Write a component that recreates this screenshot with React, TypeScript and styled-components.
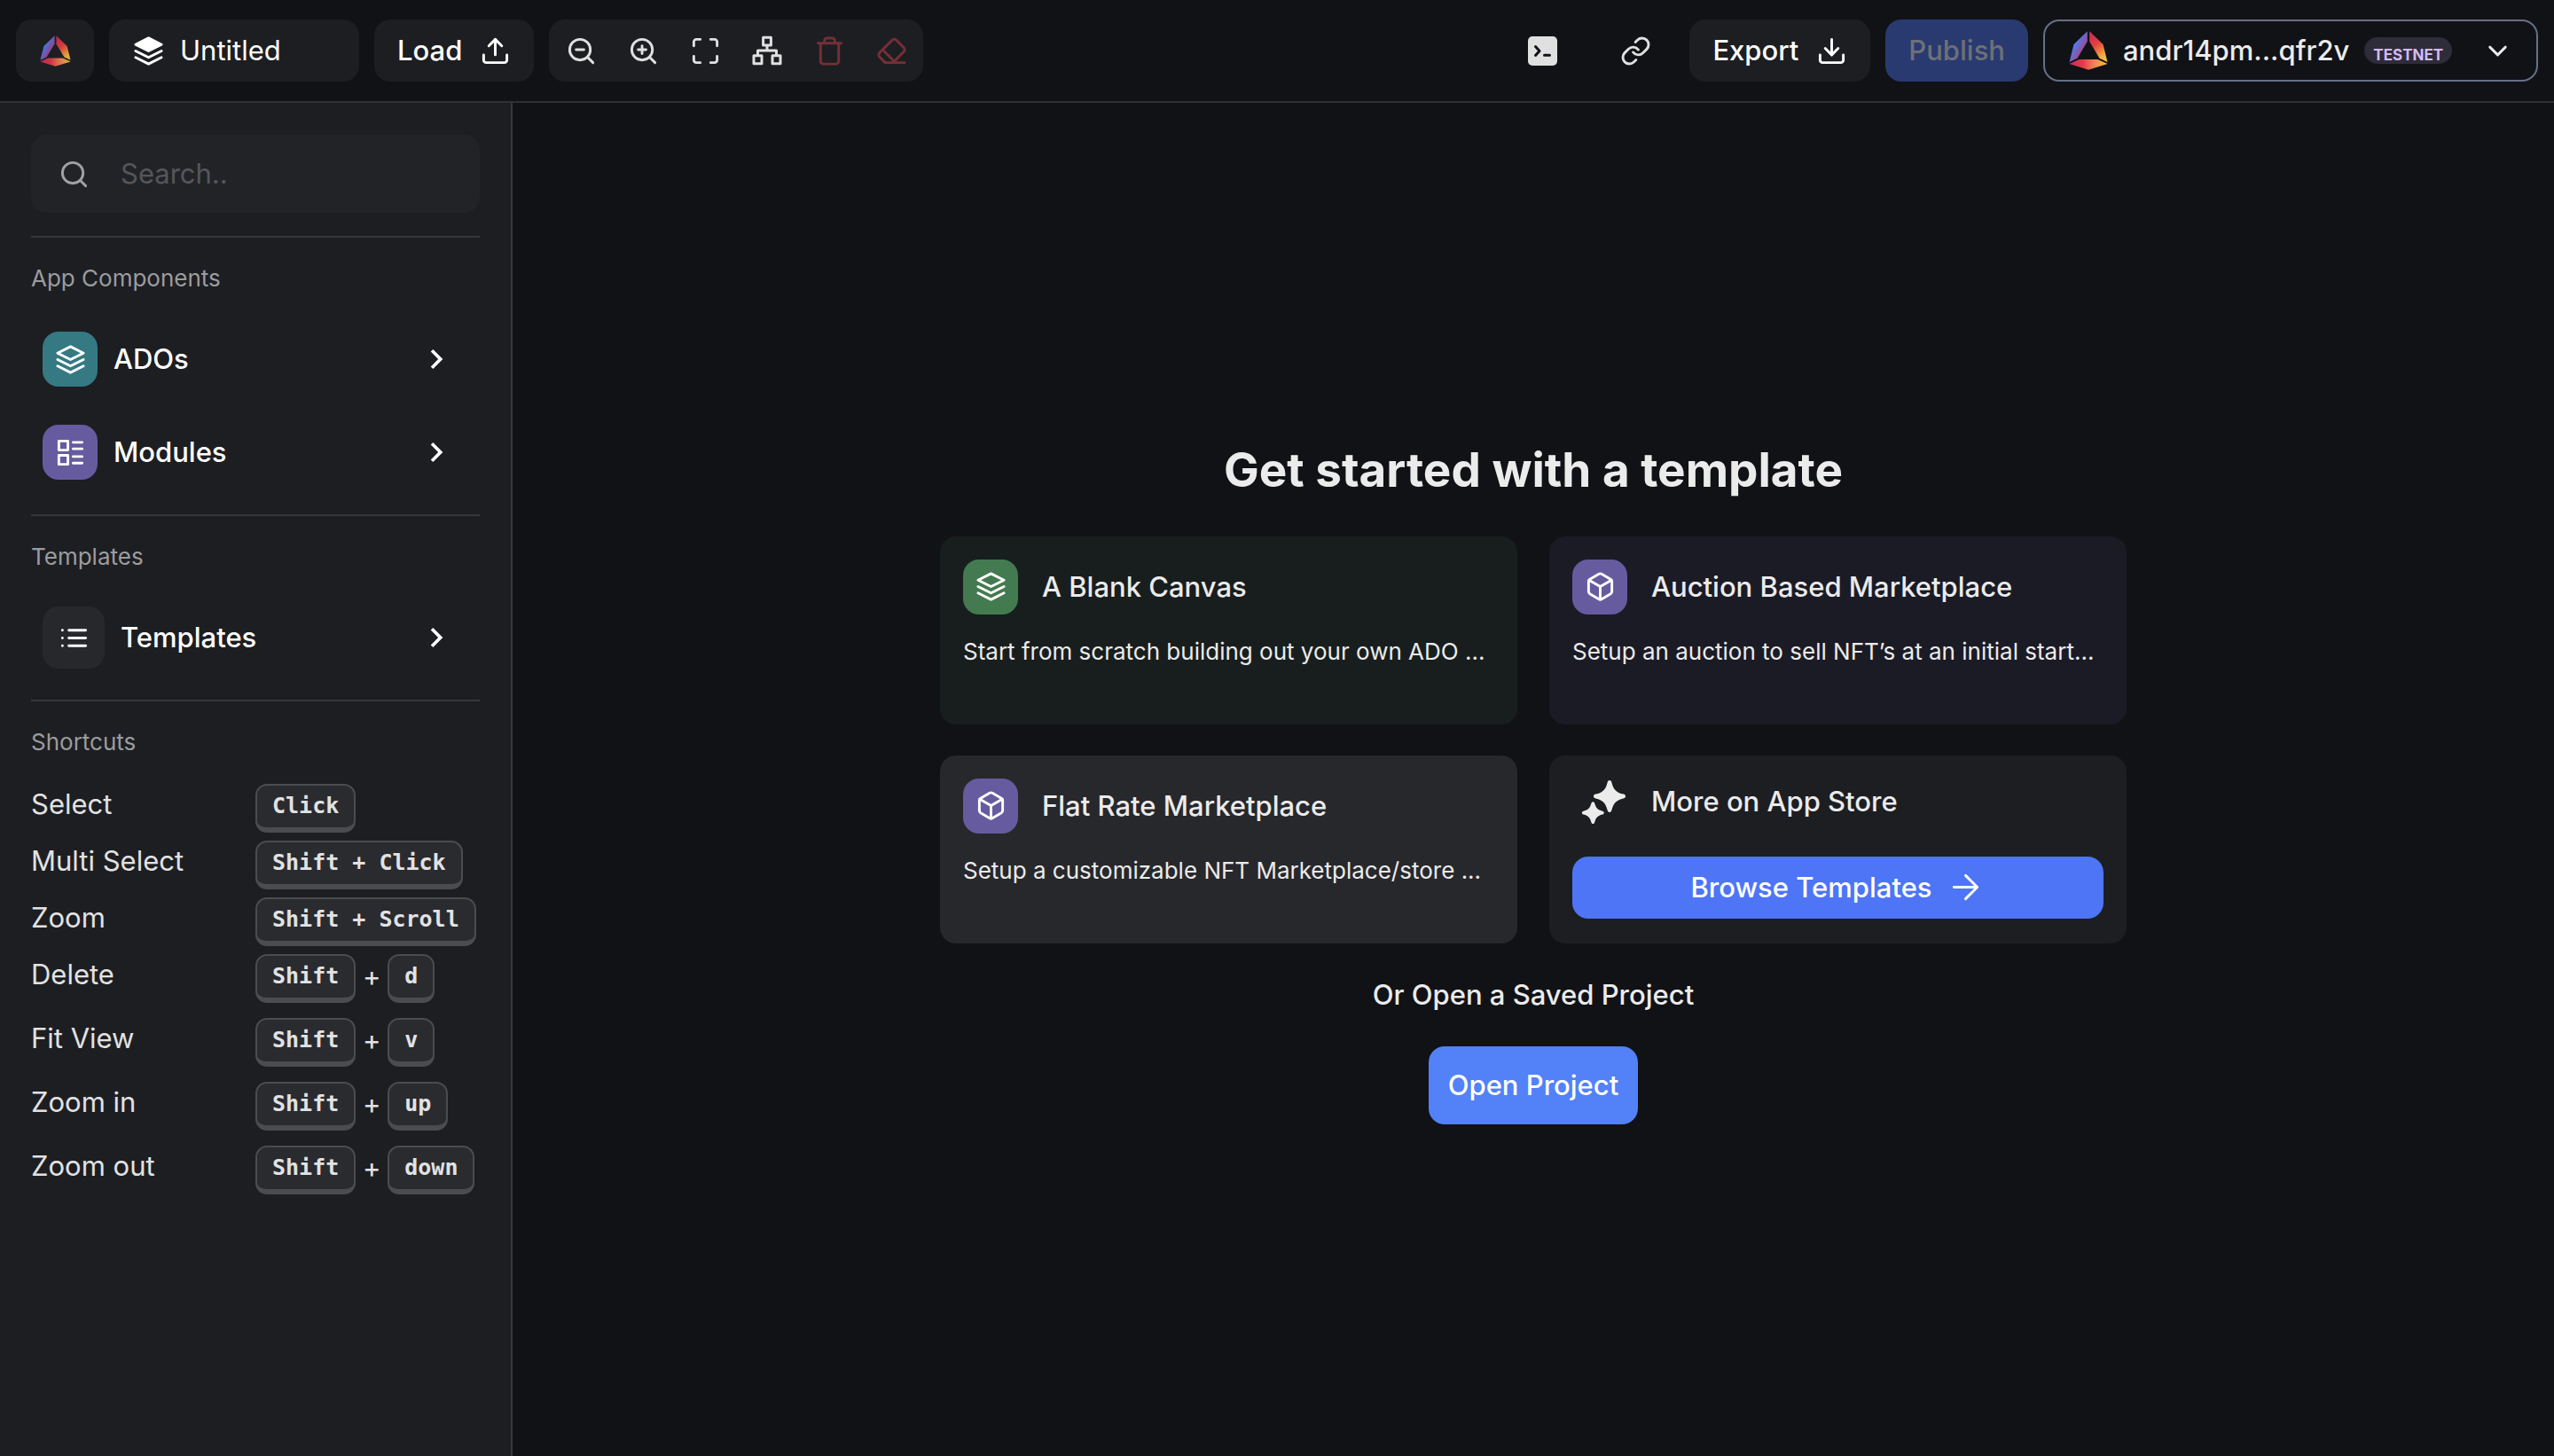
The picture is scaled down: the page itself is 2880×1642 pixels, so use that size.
import React from "react";
import styled, { createGlobalStyle } from "styled-components";

const GlobalStyle = createGlobalStyle`
  *, *::before, *::after { box-sizing: border-box; }
  body {
    margin: 0;
    background: #111216;
    color: #ebebeb;
    font-family: Inter, "Liberation Sans", sans-serif;
    font-size: 31px;
    line-height: 46px;
  }
  button, input { font: inherit; color: inherit; border: 0; margin: 0; padding: 0; }
  button { cursor: pointer; background: none; }
  button:disabled { cursor: default; }
  h1, h2, h3, p, dl, dd, ul { margin: 0; padding: 0; font-size: inherit; font-weight: inherit; }
`;

const Page = styled.div`
  min-height: 100vh;
  display: flex;
  flex-direction: column;
`;

const Header = styled.header`
  display: flex;
  justify-content: space-between;
  padding: 22px 18px;
  border-bottom: 2px solid #2f3034;
`;

const HeaderGroup = styled.div`
  display: flex;
  gap: 17px;
`;

const HeaderButton = styled.button<{ $tone?: "panel" | "plain" | "primary" }>`
  display: flex;
  align-items: center;
  justify-content: center;
  gap: 20px;
  height: 70px;
  padding: 0 26px;
  border-radius: 18px;
  font-weight: 500;
  color: ${(p) => (p.$tone === "primary" ? "#6e7076" : "#ffffff")};
  background: ${(p) =>
    p.$tone === "primary" ? "#293a71" : p.$tone === "plain" ? "transparent" : "#1d1e22"};
`;

const LogoButton = styled(HeaderButton)`
  width: 88px;
  padding: 0;
`;

const IconButton = styled(HeaderButton)`
  width: 88px;
  padding: 0;
  color: #e0e0e0;
`;

const ProjectName = styled.button`
  display: flex;
  align-items: center;
  gap: 18px;
  width: 282px;
  height: 70px;
  padding: 0 27px;
  border-radius: 18px;
  background: #1d1e22;
  color: #ffffff;
`;

const Toolbar = styled.div`
  display: flex;
  height: 70px;
  padding: 0 1px;
  border-radius: 18px;
  background: #1d1e22;
`;

const ToolButton = styled.button<{ $danger?: boolean }>`
  display: flex;
  align-items: center;
  justify-content: center;
  width: 70px;
  color: ${(p) => (p.$danger ? "#742f37" : "#e0e0e0")};
`;

const Account = styled.button`
  display: flex;
  align-items: center;
  gap: 17px;
  width: 558px;
  height: 70px;
  padding: 0 26px 0 27px;
  border: 2px solid #667085;
  border-radius: 18px;
  color: #ebebeb;
  font-weight: 500;

  & > svg:last-child { margin-left: auto; }
`;

const Badge = styled.span`
  padding: 10px 10px 0;
  height: 30px;
  border-radius: 15px;
  background: #2f2c39;
  color: #d3bcf6;
  font-size: 17px;
  line-height: 20px;
  font-weight: 700;
`;

const Body = styled.div`
  flex: 1;
  display: flex;
`;

const Sidebar = styled.aside`
  flex: none;
  width: 578px;
  padding: 36px 35px;
  background: #1d1e22;
  border-right: 2px solid #38393d;
`;

const SearchField = styled.label`
  display: flex;
  align-items: center;
  gap: 35px;
  height: 88px;
  padding: 0 31px;
  margin-bottom: 26px;
  border-radius: 18px;
  background: #222327;
  color: #a1a1a4;
`;

const SearchInput = styled.input`
  flex: 1;
  min-width: 0;
  background: transparent;
  outline: none;
  &::placeholder { color: #55565a; opacity: 1; }
`;

const Section = styled.section`
  padding: 26px 0;
  border-top: 2px solid #36373b;
`;

const SectionTitle = styled.h2`
  margin-bottom: 27px;
  font-size: 26px;
  line-height: 40px;
  color: #9b9c9f;
`;

const NavItem = styled.button`
  display: flex;
  align-items: center;
  gap: 18px;
  width: 100%;
  height: 88px;
  padding: 0 27px 0 13px;
  color: #ffffff;
  font-weight: 500;

  & + & { margin-top: 17px; }
  & > svg { margin-left: auto; }
`;

const NavList = styled.div`
  display: flex;
  flex-direction: column;
`;

const Tile = styled.span<{ $color: string; $large?: boolean }>`
  display: flex;
  align-items: center;
  justify-content: center;
  flex: none;
  width: ${(p) => (p.$large ? 70 : 62)}px;
  height: ${(p) => (p.$large ? 70 : 62)}px;
  border-radius: 18px;
  background: ${(p) => p.$color};
  color: #ffffff;
`;

const Shortcuts = styled.dl`
  display: flex;
  flex-direction: column;
  gap: 9px;
`;

const ShortcutRow = styled.div<{ $combo?: boolean }>`
  display: grid;
  grid-template-columns: 253px 1fr;
  height: ${(p) => (p.$combo ? 63 : 55)}px;
  color: #e2e2e2;
`;

const Keys = styled.dd`
  display: flex;
  align-items: flex-start;
`;

const Key = styled.kbd`
  height: 55px;
  padding: 0 17px;
  border: 2px solid #4b4c50;
  border-bottom-width: 6px;
  border-radius: 13px;
  background: #2a2b2f;
  font-family: "DejaVu Sans Mono", monospace;
  font-size: 25px;
  font-weight: 700;
  line-height: 45px;
  white-space: pre;
`;

const Plus = styled.span`
  width: 36px;
  line-height: 50px;
  text-align: center;
`;

const Main = styled.main`
  flex: 1;
  min-width: 0;
  display: flex;
  flex-direction: column;
  align-items: center;
  justify-content: center;
  gap: 35px;
  padding: 0 36px;
`;

const Title = styled.h1`
  font-size: 53px;
  line-height: 79px;
  font-weight: 700;
`;

const Cards = styled.div`
  display: grid;
  grid-template-columns: repeat(2, minmax(0, 1fr));
  gap: 35px 36px;
  width: 100%;
  max-width: 1338px;
`;

const Card = styled.article<{ $color: string }>`
  min-height: 212px;
  padding: 26px;
  border-radius: 18px;
  background: ${(p) => p.$color};
`;

const CardHead = styled.div`
  display: flex;
  align-items: center;
  gap: 27px;
  font-weight: 500;
`;

const CardText = styled.p`
  margin-top: 22px;
  font-size: 26px;
  line-height: 40px;
  white-space: nowrap;
  overflow: hidden;
`;

const BrowseLink = styled.a`
  display: flex;
  align-items: center;
  justify-content: center;
  gap: 20px;
  height: 70px;
  margin-top: 35px;
  padding-right: 5px;
  border-radius: 18px;
  background: #4e75f6;
  color: #ffffff;
  font-weight: 500;
  text-decoration: none;
`;

const Or = styled.p`
  font-weight: 500;
`;

const OpenButton = styled.button`
  height: 88px;
  padding: 0 22px;
  border-radius: 18px;
  background: #5281f8;
  color: #ffffff;
  font-weight: 500;
`;

type IconProps = { children: React.ReactNode; size?: number; stroke?: number };

const Icon = ({ children, size = 35, stroke = 2 }: IconProps) => (
  <svg
    width={size}
    height={size}
    viewBox="0 0 24 24"
    fill="none"
    stroke="currentColor"
    strokeWidth={stroke}
    strokeLinecap="round"
    strokeLinejoin="round"
    aria-hidden="true"
  >
    {children}
  </svg>
);

const LayersIcon = ({ filled = false }: { filled?: boolean }) => (
  <Icon>
    <path d="M12 2 2 7l10 5 10-5-10-5Z" fill={filled ? "currentColor" : "none"} />
    <path d="m2 17 10 5 10-5" />
    <path d="m2 12 10 5 10-5" />
  </Icon>
);

const TrayIcon = ({ arrow }: { arrow: "up" | "down" }) => (
  <Icon>
    <path d="M21 15v4a2 2 0 0 1-2 2H5a2 2 0 0 1-2-2v-4" />
    <path d="M12 3v12" />
    <path d={arrow === "up" ? "m17 8-5-5-5 5" : "m7 10 5 5 5-5"} />
  </Icon>
);

const ZoomIcon = ({ plus = false }: { plus?: boolean }) => (
  <Icon>
    <circle cx="11" cy="11" r="8" />
    <path d="m21 21-4.35-4.35M8 11h6" />
    {plus && <path d="M11 8v6" />}
  </Icon>
);

const FitIcon = () => (
  <Icon>
    <path d="M8 3H5a2 2 0 0 0-2 2v3M21 8V5a2 2 0 0 0-2-2h-3M3 16v3a2 2 0 0 0 2 2h3M16 21h3a2 2 0 0 0 2-2v-3" />
  </Icon>
);

const TreeIcon = () => (
  <svg width="34" height="34" viewBox="0 0 34 34" fill="none" stroke="currentColor" strokeWidth="3" strokeLinejoin="round" aria-hidden="true">
    <rect x="12.6" y="2.2" width="8.8" height="8.8" />
    <rect x="2" y="22.8" width="9" height="9" />
    <rect x="23" y="22.8" width="9" height="9" />
    <path d="M17 11v6M6.5 22.8V17h21v5.8" />
  </svg>
);

const TrashIcon = () => (
  <Icon>
    <path d="M3 6h18" />
    <path d="M19 6v14a2 2 0 0 1-2 2H7a2 2 0 0 1-2-2V6" />
    <path d="M8 6V4a2 2 0 0 1 2-2h4a2 2 0 0 1 2 2v2" />
  </Icon>
);

const EraserIcon = () => (
  <Icon>
    <path d="m7 21-4.3-4.3c-1-1-1-2.5 0-3.4l9.6-9.6c1-1 2.5-1 3.4 0l5.6 5.6c1 1 1 2.5 0 3.4L13 21" />
    <path d="M22 21H7" />
    <path d="m5 11 9 9" />
  </Icon>
);

const TerminalIcon = () => (
  <svg width="33" height="33" viewBox="0 0 33 33" fill="none" aria-hidden="true">
    <rect width="33" height="33" rx="5" fill="currentColor" />
    <path d="m8.5 11.500 4.500 5-4.500 5M18.500 21.200h6" stroke="#111216" strokeWidth="3" strokeLinecap="round" strokeLinejoin="round" />
  </svg>
);

const LinkIcon = () => (
  <Icon>
    <path d="M10 13a5 5 0 0 0 7.54.54l3-3a5 5 0 0 0-7.07-7.07l-1.72 1.71" />
    <path d="M14 11a5 5 0 0 0-7.54-.54l-3 3a5 5 0 0 0 7.07 7.07l1.71-1.71" />
  </Icon>
);

const ChevronDown = () => (
  <Icon>
    <path d="m6 9 6 6 6-6" />
  </Icon>
);

const ChevronRight = () => (
  <svg width="44" height="44" viewBox="0 0 24 24" fill="currentColor" aria-hidden="true">
    <path d="M10 6 8.59 7.41 13.17 12l-4.58 4.59L10 18l6-6z" />
  </svg>
);

const SearchIcon = () => (
  <Icon>
    <circle cx="11" cy="11" r="8" />
    <path d="m21 21-4.35-4.35" />
  </Icon>
);

const ModulesIcon = () => (
  <Icon>
    <path d="M3 3h7v7H3zM3 14h7v7H3zM14 4h7M14 9h7M14 15h7M14 20h7" />
  </Icon>
);

const ListIcon = () => (
  <Icon>
    <path d="M8 6h13M8 12h13M8 18h13M3 6h.01M3 12h.01M3 18h.01" />
  </Icon>
);

const CubeIcon = () => (
  <Icon>
    <path d="M21 16V8a2 2 0 0 0-1-1.73l-7-4a2 2 0 0 0-2 0l-7 4A2 2 0 0 0 3 8v8a2 2 0 0 0 1 1.73l7 4a2 2 0 0 0 2 0l7-4A2 2 0 0 0 21 16z" />
    <path d="M3.3 7 12 12l8.7-5M12 22V12" />
  </Icon>
);

const SparkleIcon = () => (
  <svg width="62" height="53" viewBox="0 0 62 53" fill="currentColor" aria-hidden="true">
    <path d="M42 2c1.600 0 2 1 2.400 2.400 2 8 5.200 11.200 13.200 13.200 1.400.4 2.400.8 2.400 2.400s-1 2-2.400 2.400c-8 2-11.200 5.200-13.200 13.200C44 37 43.600 38 42 38s-2-1-2.400-2.400c-2-8-5.200-11.200-13.200-13.200C25 22 24 21.600 24 20s1-2 2.400-2.400c8-2 11.200-5.200 13.200-13.200C40 3 40.400 2 42 2Z" />
    <path d="M23.300 26.300c1.200 0 1.600.8 1.900 1.800 1.500 5.200 3.500 7.200 8.700 8.700 1 .3 1.800.7 1.800 1.900s-.8 1.600-1.800 1.900c-5.200 1.500-7.200 3.500-8.700 8.700-.3 1-.7 1.800-1.900 1.800s-1.600-.8-1.900-1.800c-1.500-5.200-3.500-7.200-8.700-8.700-1-.3-1.800-.7-1.800-1.900s.8-1.600 1.800-1.900c5.200-1.500 7.200-3.500 8.700-8.700.3-1 .7-1.800 1.900-1.800Z" />
  </svg>
);

const ArrowRight = () => (
  <Icon>
    <path d="M3 12h18M12 3l9 9-9 9" />
  </Icon>
);

const Logo = ({ size, id, dim = false }: { size: number; id: string; dim?: boolean }) => (
  <svg width={size} height={size} viewBox="0 0 43 44" opacity={dim ? 0.9 : 1} aria-hidden="true">
    <defs>
      <linearGradient id={`${id}-l`} gradientUnits="userSpaceOnUse" x1="5" y1="16" x2="19" y2="24">
        <stop offset="0" stopColor="#4c80ee" />
        <stop offset="0.500" stopColor="#8458b0" />
        <stop offset="1" stopColor="#c43a60" />
      </linearGradient>
      <linearGradient id={`${id}-r`} gradientUnits="userSpaceOnUse" x1="23" y1="8" x2="41" y2="32">
        <stop offset="0" stopColor="#d2304e" />
        <stop offset="0.350" stopColor="#e5433f" />
        <stop offset="0.850" stopColor="#f4b640" />
        <stop offset="1" stopColor="#f4c040" />
      </linearGradient>
      <linearGradient id={`${id}-b`} gradientUnits="userSpaceOnUse" x1="0" y1="37" x2="43" y2="37">
        <stop offset="0" stopColor="#c52c5e" />
        <stop offset="0.350" stopColor="#e33b45" />
        <stop offset="0.600" stopColor="#ee7a55" />
        <stop offset="1" stopColor="#f5c542" />
      </linearGradient>
    </defs>
    <path fill={`url(#${id}-l)`} d="M20.300.3 5 15 0 35l9-4.200 11.300-19z" />
    <path fill={`url(#${id}-r)`} d="M22.700.3 38 15l5 20-9-4.200-11.300-19z" />
    <path fill={`url(#${id}-b)`} d="m0 37 11-5h21l11 5-21.500 6.700z" />
  </svg>
);

type Shortcut = { label: string; keys: string[] };

const shortcuts: Shortcut[] = [
  { label: "Select", keys: ["Click"] },
  { label: "Multi Select", keys: ["Shift + Click"] },
  { label: "Zoom", keys: ["Shift + Scroll"] },
  { label: "Delete", keys: ["Shift", "d"] },
  { label: "Fit View", keys: ["Shift", "v"] },
  { label: "Zoom in", keys: ["Shift", "up"] },
  { label: "Zoom out", keys: ["Shift", "down"] },
];

const templates = [
  {
    title: "A Blank Canvas",
    text: "Start from scratch building out your own ADO ...",
    card: "#181e1e",
    tile: "#447a50",
    icon: <LayersIcon />,
  },
  {
    title: "Auction Based Marketplace",
    text: "Setup an auction to sell NFT’s at an initial start...",
    card: "#1b1b26",
    tile: "#675ba0",
    icon: <CubeIcon />,
  },
  {
    title: "Flat Rate Marketplace",
    text: "Setup a customizable NFT Marketplace/store ...",
    card: "#27282c",
    tile: "#675ba0",
    icon: <CubeIcon />,
  },
];

export default function App() {
  return (
    <Page>
      <GlobalStyle />
      <Header>
        <HeaderGroup>
          <LogoButton aria-label="Home">
            <Logo size={35} id="brand" dim />
          </LogoButton>
          <ProjectName>
            <LayersIcon filled />
            Untitled
          </ProjectName>
          <HeaderButton>
            Load
            <TrayIcon arrow="up" />
          </HeaderButton>
          <Toolbar role="toolbar" aria-label="Canvas tools">
            <ToolButton aria-label="Zoom out"><ZoomIcon /></ToolButton>
            <ToolButton aria-label="Zoom in"><ZoomIcon plus /></ToolButton>
            <ToolButton aria-label="Fit view"><FitIcon /></ToolButton>
            <ToolButton aria-label="Arrange"><TreeIcon /></ToolButton>
            <ToolButton aria-label="Delete" $danger><TrashIcon /></ToolButton>
            <ToolButton aria-label="Clear" $danger><EraserIcon /></ToolButton>
          </Toolbar>
        </HeaderGroup>
        <HeaderGroup>
          <IconButton $tone="plain" aria-label="Console"><TerminalIcon /></IconButton>
          <IconButton $tone="plain" aria-label="Copy link"><LinkIcon /></IconButton>
          <HeaderButton>
            Export
            <TrayIcon arrow="down" />
          </HeaderButton>
          <HeaderButton $tone="primary" disabled>Publish</HeaderButton>
          <Account>
            <Logo size={44} id="wallet" />
            andr14pm...qfr2v
            <Badge>TESTNET</Badge>
            <ChevronDown />
          </Account>
        </HeaderGroup>
      </Header>
      <Body>
        <Sidebar>
          <SearchField>
            <SearchIcon />
            <SearchInput type="text" placeholder="Search.." aria-label="Search" />
          </SearchField>
          <Section>
            <SectionTitle>App Components</SectionTitle>
            <NavList>
              <NavItem>
                <Tile $color="#357983"><LayersIcon /></Tile>
                ADOs
                <ChevronRight />
              </NavItem>
              <NavItem>
                <Tile $color="#675ba0"><ModulesIcon /></Tile>
                Modules
                <ChevronRight />
              </NavItem>
            </NavList>
          </Section>
          <Section>
            <SectionTitle>Templates</SectionTitle>
            <NavItem>
              <Tile $color="#27282c" $large><ListIcon /></Tile>
              Templates
              <ChevronRight />
            </NavItem>
          </Section>
          <Section>
            <SectionTitle>Shortcuts</SectionTitle>
            <Shortcuts>
              {shortcuts.map(({ label, keys }) => (
                <ShortcutRow key={label} $combo={keys.length > 1}>
                  <dt>{label}</dt>
                  <Keys>
                    {keys.map((key, i) => (
                      <React.Fragment key={key}>
                        {i > 0 && <Plus>+</Plus>}
                        <Key>{key}</Key>
                      </React.Fragment>
                    ))}
                  </Keys>
                </ShortcutRow>
              ))}
            </Shortcuts>
          </Section>
        </Sidebar>
        <Main>
          <Title>Get started with a template</Title>
          <Cards>
            {templates.map((t) => (
              <Card key={t.title} $color={t.card}>
                <CardHead>
                  <Tile $color={t.tile}>{t.icon}</Tile>
                  <h3>{t.title}</h3>
                </CardHead>
                <CardText>{t.text}</CardText>
              </Card>
            ))}
            <Card $color="#1d1e22">
              <CardHead>
                <SparkleIcon />
                <h3>More on App Store</h3>
              </CardHead>
              <BrowseLink href="#templates">
                Browse Templates
                <ArrowRight />
              </BrowseLink>
            </Card>
          </Cards>
          <Or>Or Open a Saved Project</Or>
          <OpenButton>Open Project</OpenButton>
        </Main>
      </Body>
    </Page>
  );
}
